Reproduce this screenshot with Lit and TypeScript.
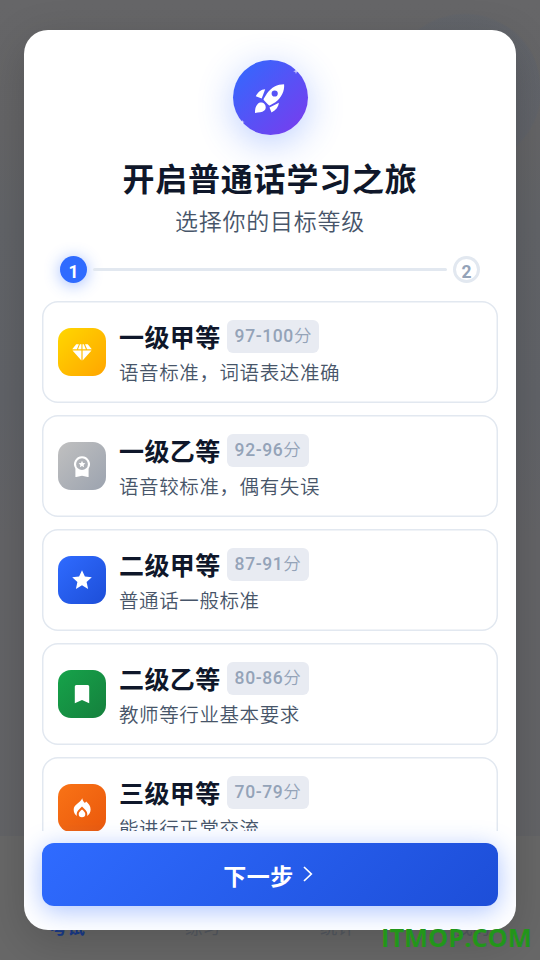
import { LitElement, html, css, svg } from "lit";
import { customElement, property } from "lit/decorators.js";

interface Level {
  name: string;
  range: string;
  desc: string;
  icon: string;
}

const LEVELS: Level[] = [
  { name: "一级甲等", range: "97-100", desc: "语音标准，词语表达准确", icon: "diamond" },
  { name: "一级乙等", range: "92-96", desc: "语音较标准，偶有失误", icon: "medal" },
  { name: "二级甲等", range: "87-91", desc: "普通话一般标准", icon: "star" },
  { name: "二级乙等", range: "80-86", desc: "教师等行业基本要求", icon: "bookmark" },
  { name: "三级甲等", range: "70-79", desc: "能进行正常交流", icon: "flame" },
];

const ICONS: Record<string, unknown> = {
  diamond: svg`<path d="M5.2 3.2h2.7L5.9 8.3H1.2zM9 3.2h1.4v5.1H7zM11.5 3.2h1.3l2.1 5.1h-3.4zM14 3.2h2.8l4 5.1h-4.7zM1.5 9.4h8.9v10.2zM11.6 9.4h8.9l-8.9 10.2z"/>`,
  medal: svg`<path fill-rule="evenodd" d="M11 1.2a8 8 0 0 1 6.6 12.5v8.500L11 20.800 4.400 22.200v-8.500A8 8 0 0 1 11 1.200zm0 2.100a5.900 5.900 0 1 0 0 11.800 5.900 5.900 0 0 0 0-11.800z"/><path d="m11 5.800 1 2.300 2.400.2-1.800 1.600.5 2.400L11 11.100l-2.100 1.200.5-2.400-1.800-1.600 2.400-.2z"/>`,
  star: svg`<path d="m11 1.2 2.9 6.4 6.9.7-5.2 4.7 1.5 6.9-6.1-3.6-6.1 3.6 1.5-6.9-5.2-4.7 6.9-.7z"/>`,
  bookmark: svg`<path d="M5.3 2h11.4a1.5 1.5 0 0 1 1.5 1.5v16.7L11 17.1l-7.2 3.1V3.5A1.5 1.5 0 0 1 5.3 2z"/>`,
  flame: svg`<path d="M11.3 1.3c.3 2.3 1.2 3.500 2.600 4.700l1.300-1.500c2.500 2.100 4.400 4.400 4.400 7.900 0 2.900-1.300 5.100-3.600 6.500.2-.7.3-1.300.3-2 0-2.700-2.500-4.600-5.300-7.300-2.800 2.700-5.300 4.600-5.300 7.300 0 .7.1 1.300.3 2A7.700 7.700 0 0 1 2.700 12.400C2.700 7.500 9.400 5.900 11.300 1.300z"/><path d="M11 12.400c1.700 1.500 3.300 2.800 3.300 4.600a3.300 3.300 0 0 1-6.600 0c0-1.800 1.600-3.100 3.300-4.600z"/>`,
};

const FONT = css`
  font-family: Roboto, "Noto Sans CJK SC", sans-serif;
`;

@customElement("level-card")
class LevelCard extends LitElement {
  @property({ attribute: false }) level!: Level;

  static styles = css`
    :host {
      display: flex;
      flex: none;
      box-sizing: border-box;
      height: 102px;
      border-radius: 16px;
      box-shadow: inset 0 0 0 1.5px #e2e8f0;
      padding: 0 16.4px;
      align-items: center;
      gap: 12.6px;
      background: #fff;
    }
    .tile {
      flex: none;
      width: 48px;
      height: 48px;
      border-radius: 13px;
      display: flex;
      align-items: center;
      justify-content: center;
    }
    .tile svg { width: 22px; height: 22px; fill: #fff; }
    .diamond { background: linear-gradient(135deg, #ffd700, #ffa500); }
    .medal { background: linear-gradient(135deg, #c0c0c0, #9ca3af); }
    .star { background: linear-gradient(135deg, #2f6bff, #1d4ed8); }
    .bookmark { background: linear-gradient(135deg, #16a34a, #15803d); }
    .flame { background: linear-gradient(135deg, #f97316, #ea580c); }
    .body { display: flex; flex-direction: column; padding-top: 3px; }
    .head { display: flex; align-items: center; gap: 6px; height: 36px; }
    .name {
      font-weight: 700;
      font-size: 25px;
      letter-spacing: 0.4px;
      line-height: 36px;
      padding-top: 5px;
      color: #0f172a;
      white-space: nowrap;
    }
    .range {
      box-sizing: border-box;
      height: 33px;
      border-radius: 6px;
      padding: 0 7.5px 0 8px;
      background: #e8ebf2;
      color: #94a3b8;
      font-weight: 500;
      font-size: 17.5px;
      letter-spacing: 0.6px;
      line-height: 33px;
      margin-top: -1px;
      white-space: nowrap;
    }
    .unit { font-weight: 350; }
    .desc {
      font-size: 19.5px;
      font-weight: 350;
      letter-spacing: 0.6px;
      line-height: 30px;
      margin-top: 4px;
      color: #475569;
      white-space: nowrap;
    }
  `;

  render() {
    const l = this.level;
    return html`
      <div class="tile ${l.icon}"><svg viewBox="0 0 22 22">${ICONS[l.icon]}</svg></div>
      <div class="body">
        <div class="head">
          <span class="name">${l.name}</span>
          <span class="range">${l.range}<span class="unit">分</span></span>
        </div>
        <div class="desc">${l.desc}</div>
      </div>
    `;
  }
}

@customElement("app-root")
class AppRoot extends LitElement {
  static styles = css`
    :host {
      display: block;
      position: relative;
      width: 540px;
      height: 960px;
      overflow: hidden;
      background: #646466;
      ${FONT}
    }
    .page {
      display: flex;
      flex-direction: column;
      height: 960px;
      background:
        radial-gradient(circle at 465px 90px, rgba(90, 98, 112, 0.3) 0 75px, transparent 77px),
        linear-gradient(#666668, #656567 130px, #626468 220px, #616368 400px, #646467 540px, #636467);
    }
    .nav {
      margin-top: auto;
      height: 124px;
      display: grid;
      grid-template-columns: repeat(4, 1fr);
      align-items: end;
      text-align: center;
      background: #686868;
      color: #555a62;
      font-size: 17.5px;
      line-height: 26px;
    }
    .nav span { padding-bottom: 19px; }
    .nav .on { color: #193b8c; font-weight: 700; }
    .modal {
      position: absolute;
      inset: 30px 24px;
      box-sizing: border-box;
      border-radius: 24px;
      background: #fff;
      box-shadow: 0 12px 44px rgba(0, 0, 0, 0.18);
      overflow: hidden;
      padding: 30px 18px 24px;
      display: flex;
      flex-direction: column;
    }
    .hero {
      align-self: center;
      flex: none;
      width: 75px;
      height: 75px;
      border-radius: 50%;
      background: linear-gradient(135deg, #2f6bff, #7c3aed);
      box-shadow: 0 8px 36px rgba(47, 107, 255, 0.32);
    }
    .hero svg { display: block; width: 75px; height: 75px; }
    h1 {
      margin: 22px 0 0;
      text-align: center;
      font-size: 32px;
      line-height: 46px;
      letter-spacing: 0.8px;
      font-weight: 700;
      color: #0f172a;
    }
    .sub {
      text-align: center;
      font-size: 23px;
      font-weight: 350;
      line-height: 34px;
      margin-top: 3px;
      letter-spacing: 0.75px;
      color: #475569;
    }
    .steps {
      display: flex;
      align-items: center;
      gap: 6px;
      height: 27px;
      margin: 16.4px 18px 0;
    }
    .dot {
      box-sizing: border-box;
      flex: none;
      width: 27px;
      height: 27px;
      border-radius: 50%;
      text-align: center;
      font-size: 17.5px;
      font-weight: 700;
      line-height: 33px;
    }
    .now { background: #2f6bff; color: #fff; box-shadow: 0 2px 16px rgba(47, 107, 255, 0.45); }
    .next { box-shadow: inset 0 0 0 3px #e2e8f0; color: #94a3b8; }
    .bar { flex: 1; height: 3px; border-radius: 2px; background: #e2e8f0; }
    .list {
      display: flex;
      flex-direction: column;
      gap: 12px;
      height: 529.6px;
      overflow: hidden;
      margin-top: 18px;
    }
    .cta {
      flex: none;
      margin-top: 12px;
      height: 63px;
      border: 0;
      border-radius: 12px;
      background: linear-gradient(135deg, #2f6bff, #1d4ed8);
      box-shadow: 0 5px 26px rgba(47, 107, 255, 0.4);
      display: flex;
      align-items: center;
      justify-content: center;
      gap: 8px;
      padding: 0 3px 0 0;
      color: #fff;
      font-size: 23px;
      font-weight: 700;
      letter-spacing: 0.5px;
      ${FONT}
    }
    .cta svg { width: 12px; height: 18px; fill: none; stroke: #fff; stroke-width: 1.7; }
    .cta span { padding-top: 1px; }
    .brand {
      position: absolute;
      left: 381px;
      top: 919px;
      font: 700 25.4px/36px "Open Sans", sans-serif;
      color: #22961a;
      white-space: nowrap;
    }
  `;

  render() {
    return html`
      <div class="page">
        <div class="nav"><span class="on">考试</span><span>练习</span><span>统计</span><span>我的</span></div>
      </div>
      <div class="modal">
        <div class="hero">
          <svg viewBox="0.5 0 75 75" fill="#fff">
            <path fill-rule="evenodd" d="M51.6 24.2c.6 6.6-2.6 13.4-8.700 18l-5.300 3c-.8.4-1.600.1-2.100-.6l-3.600-3.800c-.6-.7-1.200-1.200-.7-2.100l3.400-5.500c4.200-5.800 10.300-9 17-9zM42.200 30.400a3.100 3.100 0 1 0 0 6.200 3.100 3.100 0 0 0 0-6.200z"/>
            <path d="M32.700 29.300 29.200 38.400 23.300 36.200C25.500 32.200 28.300 29.500 32.700 29.300zM37 47.500 46.400 42.700C46.100 46.700 43.600 50 39 52.600zM22.500 52.900C22.500 49.200 22.800 46.500 25.200 43.900 27.200 41.900 30.300 42.400 32 43.900 33.600 45.700 33.800 48.900 31.800 50.500 29.300 52.600 26.500 52.300 22.500 52.900z"/>
            <path d="m63.500 8.500.8 2 2 .8-2 .8-.8 2-.8-2-2-.8 2-.8zM10 60l.6 1.500 1.500.6-1.500.6L10 64.200l-.6-1.500-1.500-.6 1.500-.6z" opacity=".65"/>
          </svg>
        </div>
        <h1>开启普通话学习之旅</h1>
        <div class="sub">选择你的目标等级</div>
        <div class="steps">
          <div class="dot now">1</div>
          <div class="bar"></div>
          <div class="dot next">2</div>
        </div>
        <div class="list">${LEVELS.map((l) => html`<level-card .level=${l}></level-card>`)}</div>
        <button class="cta"><span>下一步</span>
          <svg viewBox="0 0 12 18"><path d="m2 2 7.300 7L2 16"/></svg>
        </button>
      </div>
      <div class="brand">ITMOP.COM</div>
    `;
  }
}
